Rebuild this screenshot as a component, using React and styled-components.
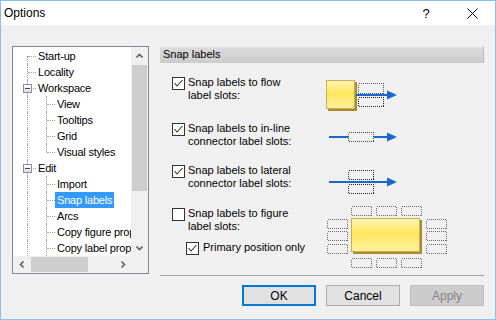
import React from "react";
import styled, { createGlobalStyle } from "styled-components";

const GlobalStyle = createGlobalStyle`
  html, body {
    margin: 0;
    padding: 0;
    background: #f0f0f0;
  }
  * {
    box-sizing: border-box;
  }
`;

const Window = styled.div`
  width: 496px;
  height: 320px;
  border: 1px solid #8cbfee;
  background: #f0f0f0;
  display: flex;
  flex-direction: column;
  font-family: "Liberation Sans", Arial, sans-serif;
  font-size: 11px;
  color: #000;
  overflow: hidden;
`;

const TitleBar = styled.div`
  height: 24px;
  background: #fff;
  display: flex;
  align-items: center;
  padding-left: 3px;
  flex: none;
`;

const Title = styled.span`
  font-size: 12px;
  color: #000;
  flex: 1;
`;

const CaptionButton = styled.div`
  width: 46px;
  height: 24px;
  display: flex;
  align-items: center;
  justify-content: center;
  font-size: 13px;
`;

const Body = styled.div`
  flex: 1;
  padding: 21px 11px 0 11px;
  display: flex;
  flex-direction: column;
`;

const MainRow = styled.div`
  display: flex;
  gap: 11px;
  align-items: flex-start;
`;

/* ---------- tree ---------- */

const TreeBox = styled.div`
  width: 137px;
  height: 228px;
  border: 1px solid #828790;
  background: #fff;
  display: grid;
  grid-template-columns: 1fr 17px;
  grid-template-rows: 1fr 17px;
  flex: none;
`;

const TreeList = styled.div`
  overflow: hidden;
  padding: 1px 0 0 4px;
`;

const TreeRow = styled.div`
  height: 16px;
  display: flex;
  align-items: center;
  white-space: nowrap;
  letter-spacing: -0.2px;
`;

const Guide = styled.span`
  position: relative;
  width: 19px;
  height: 16px;
  flex: none;

  &::before {
    content: "";
    position: absolute;
    left: 10px;
    top: ${(p) => (p.$kind === "first" ? "8px" : "0")};
    height: ${(p) => (p.$kind === "corner" ? "8px" : p.$kind === "first" ? "8px" : "16px")};
    border-left: 1px dotted #a0a0a0;
  }

  &::after {
    content: "";
    display: ${(p) => (p.$kind === "pass" ? "none" : "block")};
    position: absolute;
    left: 11px;
    top: 8px;
    width: 8px;
    border-top: 1px dotted #a0a0a0;
  }
`;

const Expander = styled.span`
  position: absolute;
  left: 6px;
  top: 4px;
  width: 9px;
  height: 9px;
  border: 1px solid #8f8f8f;
  background: linear-gradient(#ffffff, #dedede);
  z-index: 1;

  &::after {
    content: "";
    position: absolute;
    left: 1px;
    top: 3px;
    width: 5px;
    height: 1px;
    background: #21429a;
  }
`;

const ItemLabel = styled.span`
  padding: 0 2px;
  line-height: 16px;
  height: 16px;
  background: ${(p) => (p.$selected ? "#3399ff" : "transparent")};
  color: ${(p) => (p.$selected ? "#fff" : "#000")};
`;

const VScroll = styled.div`
  background: #f0f0f0;
  display: flex;
  flex-direction: column;
`;

const HScroll = styled.div`
  background: #f0f0f0;
  display: flex;
`;

const Corner = styled.div`
  background: #f0f0f0;
`;

const ArrowCell = styled.div`
  width: 17px;
  height: 17px;
  flex: none;
  display: flex;
  align-items: center;
  justify-content: center;
`;

const VTrack = styled.div`
  flex: 1;
  padding: 1px 1px 0;
`;

const VThumb = styled.div`
  height: ${(p) => p.$size}px;
  background: #cdcdcd;
`;

const HTrack = styled.div`
  flex: 1;
  padding: 1px 0 1px 1px;
`;

const HThumb = styled.div`
  width: ${(p) => p.$size}px;
  height: 100%;
  background: #cdcdcd;
`;

const Chevron = ({ dir }) => {
  const pts = {
    up: "0.5,4.5 3.5,1.5 6.5,4.5",
    down: "0.5,1.5 3.5,4.5 6.5,1.5",
    left: "4.5,0.5 1.5,3.5 4.5,6.5",
    right: "1.5,0.5 4.5,3.5 1.5,6.5",
  }[dir];
  const horiz = dir === "left" || dir === "right";
  return (
    <svg width={horiz ? 6 : 7} height={horiz ? 7 : 6} viewBox={horiz ? "0 0 6 7" : "0 0 7 6"}>
      <polyline points={pts} fill="none" stroke="#606060" strokeWidth="1.6" />
    </svg>
  );
};

const treeItems = [
  { label: "Start-up", guides: ["first"] },
  { label: "Locality", guides: ["tee"] },
  { label: "Workspace", guides: ["tee"], open: true },
  { label: "View", guides: ["pass", "tee"] },
  { label: "Tooltips", guides: ["pass", "tee"] },
  { label: "Grid", guides: ["pass", "tee"] },
  { label: "Visual styles", guides: ["pass", "corner"] },
  { label: "Edit", guides: ["tee"], open: true },
  { label: "Import", guides: ["pass", "tee"] },
  { label: "Snap labels", guides: ["pass", "tee"], selected: true },
  { label: "Arcs", guides: ["pass", "tee"] },
  { label: "Copy figure properties", guides: ["pass", "tee"] },
  { label: "Copy label properties", guides: ["pass", "tee"] },
];

function Tree() {
  return (
    <TreeBox>
      <TreeList>
        {treeItems.map((item) => (
          <TreeRow key={item.label}>
            {item.guides.map((g, i) => (
              <Guide key={i} $kind={g}>
                {item.open && i === item.guides.length - 1 && <Expander />}
              </Guide>
            ))}
            <ItemLabel $selected={item.selected}>{item.label}</ItemLabel>
          </TreeRow>
        ))}
      </TreeList>
      <VScroll>
        <ArrowCell>
          <Chevron dir="up" />
        </ArrowCell>
        <VTrack>
          <VThumb $size={126} />
        </VTrack>
        <ArrowCell>
          <Chevron dir="down" />
        </ArrowCell>
      </VScroll>
      <HScroll>
        <ArrowCell>
          <Chevron dir="left" />
        </ArrowCell>
        <HTrack>
          <HThumb $size={57} />
        </HTrack>
        <ArrowCell>
          <Chevron dir="right" />
        </ArrowCell>
      </HScroll>
      <Corner />
    </TreeBox>
  );
}

/* ---------- settings panel ---------- */

const Panel = styled.div`
  width: 324px;
  display: flex;
  flex-direction: column;
`;

const PanelHeader = styled.div`
  height: 17px;
  padding-left: 3px;
  line-height: 17px;
  background: linear-gradient(#f4f4f4 0, #dadada 2px, #cccccc 100%);
  border-right: 1px solid #b8b8b8;
`;

const OptionList = styled.div`
  padding-top: 7px;
`;

const OptionRow = styled.div`
  height: ${(p) => p.$h}px;
  display: flex;
`;

const TextCol = styled.div`
  width: 160px;
  padding: 6px 0 0 12px;
  flex: none;
`;

const CheckLine = styled.label`
  display: flex;
  align-items: flex-start;
  gap: ${(p) => (p.$sub ? 4 : 3)}px;
  margin-left: ${(p) => (p.$sub ? 14 : 0)}px;
  margin-top: ${(p) => (p.$sub ? 8 : 0)}px;
  line-height: 13px;
`;

const Box = styled.span`
  width: 13px;
  height: 13px;
  margin-top: 1px;
  border: 1px solid #333;
  background: #fff;
  flex: none;
  display: flex;
`;

function Check({ checked, sub, children }) {
  return (
    <CheckLine $sub={sub}>
      <Box>
        {checked && (
          <svg width="11" height="11" viewBox="0 0 11 11">
            <polyline points="1.5,5 4,8 9.5,2" fill="none" stroke="#333" strokeWidth="1.1" />
          </svg>
        )}
      </Box>
      <span>{children}</span>
    </CheckLine>
  );
}

const BLUE = "#1769d1";

const Slot = ({ x, y, w = 20, h = 9, color = "#404040" }) => (
  <rect
    x={x + 0.5}
    y={y + 0.5}
    width={w}
    height={h}
    fill="none"
    stroke={color}
    strokeDasharray="1 1"
    shapeRendering="crispEdges"
  />
);

const Arrow = ({ x1, x2, y }) => (
  <g>
    <rect x={x1} y={y - 1} width={x2 - x1} height={2} fill={BLUE} />
    <polygon points={`${x2 - 1},${y - 4.5} ${x2 + 9},${y} ${x2 - 1},${y + 4.5}`} fill={BLUE} />
  </g>
);

const Figure = ({ x, y, w, h }) => (
  <g>
    <rect x={x + 2} y={y + 2} width={w} height={h} fill="#a98a2e" />
    <rect x={x + 0.5} y={y + 0.5} width={w - 1} height={h - 1} fill="url(#gold)" stroke="#cfae4a" />
  </g>
);

const Defs = () => (
  <defs>
    <linearGradient id="gold" x1="0" y1="0" x2="0" y2="1">
      <stop offset="0" stopColor="#fff6b8" />
      <stop offset="0.45" stopColor="#ffe75e" />
      <stop offset="1" stopColor="#fff0a0" />
    </linearGradient>
  </defs>
);

const Pic = styled.svg`
  flex: none;
  display: block;
`;

function FlowPic() {
  return (
    <Pic width="130" height="46">
      <Defs />
      <Figure x={6} y={10} w={29} h={29} />
      <Slot x={38} y={13} w={25} h={10} color="#555" />
      <Slot x={38} y={27} w={25} h={9} color="#222" />
      <Arrow x1={36} x2={68} y={25} />
    </Pic>
  );
}

function InlinePic() {
  return (
    <Pic width="130" height="42">
      <rect x={9} y={20} width={19} height={2} fill={BLUE} />
      <Slot x={28} y={16} w={25} h={9} color="#444" />
      <Arrow x1={54} x2={68} y={21} />
    </Pic>
  );
}

function LateralPic() {
  return (
    <Pic width="130" height="43">
      <Slot x={28} y={12} w={25} h={9} color="#222" />
      <Slot x={28} y={26} w={25} h={9} color="#222" />
      <Arrow x1={9} x2={68} y={24} />
    </Pic>
  );
}

function FigurePic() {
  const cols = [31, 56, 81];
  const rows = [18, 30, 43];
  return (
    <Pic width="130" height="69">
      <Defs />
      {cols.map((x) => (
        <Slot key={"t" + x} x={x} y={5} color="#6a6a6a" />
      ))}
      {cols.map((x) => (
        <Slot key={"b" + x} x={x} y={57} color="#6a6a6a" />
      ))}
      {rows.map((y) => (
        <Slot key={"l" + y} x={7} y={y} color="#6a6a6a" />
      ))}
      {rows.map((y) => (
        <Slot key={"r" + y} x={106} y={y} color="#6a6a6a" />
      ))}
      <Figure x={31} y={17} w={69} h={34} />
    </Pic>
  );
}

const Separator = styled.div`
  height: 1px;
  margin-top: 5px;
  background: #a0a0a0;
`;

const ButtonRow = styled.div`
  display: flex;
  justify-content: flex-end;
  gap: 10px;
  margin-top: 9px;
`;

const Button = styled.button`
  width: 74px;
  height: 21px;
  padding: 0;
  font-family: "Liberation Sans", Arial, sans-serif;
  font-size: 12px;
  background: ${(p) => (p.disabled ? "#cccccc" : "#e1e1e1")};
  color: ${(p) => (p.disabled ? "#838383" : "#000")};
  border: ${(p) => (p.$default ? "2px solid #0078d7" : p.disabled ? "1px solid #bfbfbf" : "1px solid #adadad")};
`;

export default function App() {
  return (
    <>
      <GlobalStyle />
      <Window>
        <TitleBar>
          <Title>Options</Title>
          <CaptionButton>?</CaptionButton>
          <CaptionButton>
            <svg width="11" height="11" viewBox="0 0 11 11">
              <path d="M0.5 0.5 L10.5 10.5 M10.5 0.5 L0.5 10.5" stroke="#000" strokeWidth="1" />
            </svg>
          </CaptionButton>
        </TitleBar>
        <Body>
          <MainRow>
            <Tree />
            <Panel>
              <PanelHeader>Snap labels</PanelHeader>
              <OptionList>
                <OptionRow $h={46}>
                  <TextCol>
                    <Check checked>
                      Snap labels to flow
                      <br />
                      label slots:
                    </Check>
                  </TextCol>
                  <FlowPic />
                </OptionRow>
                <OptionRow $h={42}>
                  <TextCol>
                    <Check checked>
                      Snap labels to in-line
                      <br />
                      connector label slots:
                    </Check>
                  </TextCol>
                  <InlinePic />
                </OptionRow>
                <OptionRow $h={43}>
                  <TextCol>
                    <Check checked>
                      Snap labels to lateral
                      <br />
                      connector label slots:
                    </Check>
                  </TextCol>
                  <LateralPic />
                </OptionRow>
                <OptionRow $h={69}>
                  <TextCol>
                    <Check>
                      Snap labels to figure
                      <br />
                      label slots:
                    </Check>
                    <Check checked sub>
                      Primary position only
                    </Check>
                  </TextCol>
                  <FigurePic />
                </OptionRow>
              </OptionList>
              <Separator />
            </Panel>
          </MainRow>
          <ButtonRow>
            <Button $default>OK</Button>
            <Button>Cancel</Button>
            <Button disabled>Apply</Button>
          </ButtonRow>
        </Body>
      </Window>
    </>
  );
}
